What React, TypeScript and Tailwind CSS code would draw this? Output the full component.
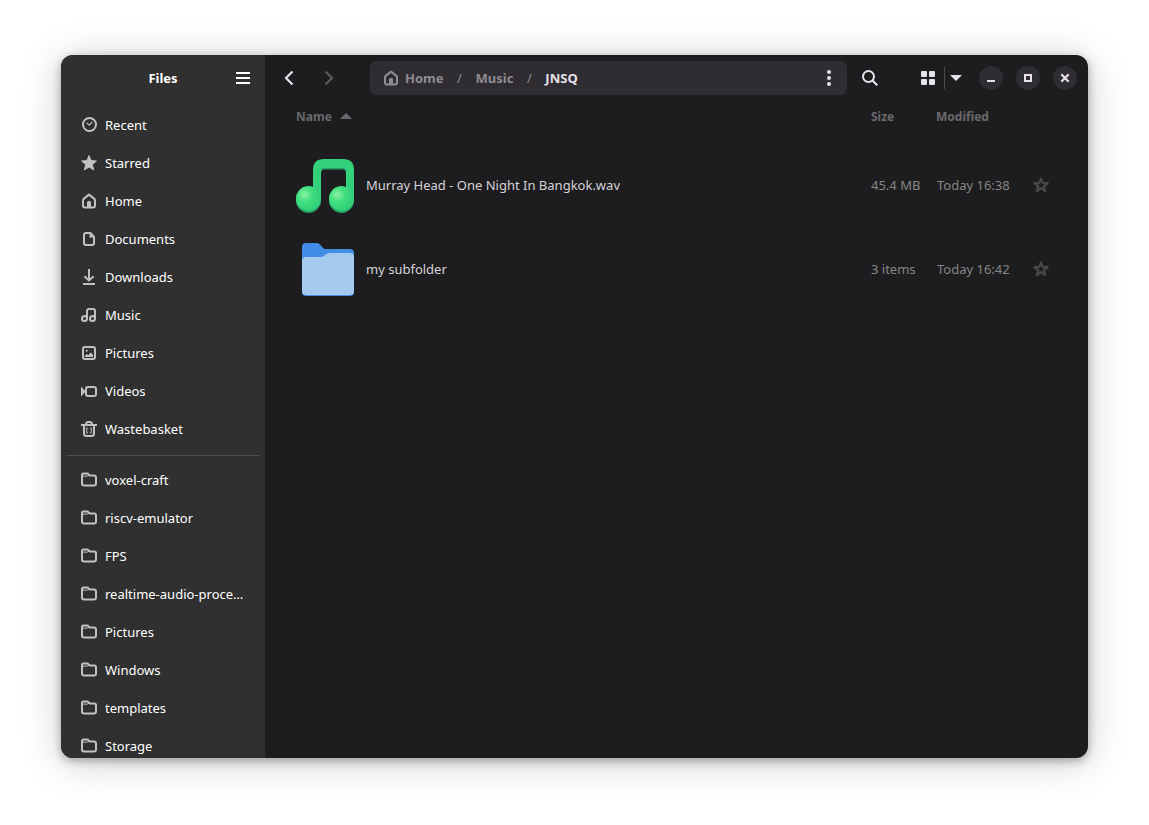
import React from "react";

type IconProps = { className?: string };

function Svg({ className = "", children }: { className?: string; children: React.ReactNode }) {
  return (
    <svg className={`size-4 shrink-0 ${className}`} viewBox="0 0 16 16" fill="none" aria-hidden="true">
      {children}
    </svg>
  );
}

const RecentIcon = (p: IconProps) => (
  <Svg {...p}>
    <circle cx="8.5" cy="7.5" r="6.5" stroke="currentColor" strokeWidth="2" />
    <path d="M5.6 5.6L8.1 8.1L11.4 4.8" stroke="currentColor" strokeWidth="1.1" />
  </Svg>
);

const StarIcon = (p: IconProps) => (
  <Svg {...p}>
    <path
      d="M8 .6L10.1 5.6L15.4 6L11.3 9.5L12.7 14.9L8 12L3.3 14.9L4.7 9.5L.6 6L5.9 5.6Z"
      fill="currentColor"
      stroke="currentColor"
      strokeWidth="1"
      strokeLinejoin="round"
    />
  </Svg>
);

const StarOutlineIcon = (p: IconProps) => (
  <Svg {...p}>
    <path
      d="M8 1.6L9.7 5.9L14.5 6.2L10.8 9.2L12.1 13.9L8 11.3L3.9 13.9L5.2 9.2L1.5 6.2L6.3 5.9Z"
      stroke="currentColor"
      strokeWidth="2.4"
      strokeLinejoin="round"
    />
  </Svg>
);

const HomeIcon = (p: IconProps) => (
  <Svg {...p}>
    <path
      d="M8 1.6L13.1 5.6Q14 6.3 14 7.4V12.6Q14 14.500 12 14.500H4Q2 14.500 2 12.6V7.4Q2 6.3 2.9 5.6Z"
      stroke="currentColor"
      strokeWidth="2"
      strokeLinejoin="round"
    />
    <path d="M6 15V9.500Q6 8 7.500 8H8.500Q10 8 10 9.500V15Z" fill="currentColor" />
  </Svg>
);

const DocumentIcon = (p: IconProps) => (
  <Svg {...p}>
    <path
      d="M5 2H9.4L13 5.6V12Q13 14 11 14H5Q3 14 3 12V4Q3 2 5 2Z"
      stroke="currentColor"
      strokeWidth="2"
      strokeLinejoin="round"
    />
    <path d="M8.500 2V6.500H13Z" fill="currentColor" />
  </Svg>
);

const DownloadIcon = (p: IconProps) => (
  <Svg {...p}>
    <path d="M8 0V11M3.4 7.2L8 11.4L12.6 7.2" stroke="currentColor" strokeWidth="2" />
    <path d="M2 15H14" stroke="currentColor" strokeWidth="2" />
  </Svg>
);

const MusicIcon = (p: IconProps) => (
  <Svg {...p}>
    <path d="M6 11.5V4Q6 2 8 2H12Q14 2 14 4V11.5" stroke="currentColor" strokeWidth="2" />
    <circle cx="3.500" cy="11.5" r="2.500" stroke="currentColor" strokeWidth="2" />
    <circle cx="11.500" cy="11.5" r="2.500" stroke="currentColor" strokeWidth="2" />
  </Svg>
);

const PictureIcon = (p: IconProps) => (
  <Svg {...p}>
    <rect x="2" y="2" width="12" height="12" rx="2" stroke="currentColor" strokeWidth="2" />
    <path d="M4 12V10.5L6 9L7.4 10L9.8 7.4L12 9.8V12Z" fill="currentColor" />
    <circle cx="5.8" cy="5.8" r="1" fill="currentColor" />
  </Svg>
);

const VideoIcon = (p: IconProps) => (
  <Svg {...p}>
    <rect x="5" y="4" width="10" height="9" rx="2" stroke="currentColor" strokeWidth="2" />
    <path d="M0 3.6L4.6 8.5L0 13.4Z" fill="currentColor" />
  </Svg>
);

const TrashIcon = (p: IconProps) => (
  <Svg {...p}>
    <path d="M0 4H16" stroke="currentColor" strokeWidth="2" />
    <path d="M5 3.6Q5 1 7 1H9Q11 1 11 3.6" stroke="currentColor" strokeWidth="2" />
    <path d="M3 4V12.5Q3 15 5.5 15H10.5Q13 15 13 12.5V4" stroke="currentColor" strokeWidth="2" />
    <path d="M6.9 7H5.7V12H6.9M9.1 7H10.3V12H9.1" stroke="currentColor" strokeWidth="1" />
  </Svg>
);

const FolderIcon = (p: IconProps) => (
  <Svg {...p}>
    <path
      d="M1 4.500V3Q1 1.500 2.500 1.500H6Q7 1.500 7.600 2.300L8.500 3.500H13Q15 3.500 15 5.500V11.500Q15 13.500 13 13.500H3Q1 13.500 1 11.500Z"
      stroke="currentColor"
      strokeWidth="2"
      strokeLinejoin="round"
    />
    <path d="M1 4.100H6.4L8.6 2.8" stroke="currentColor" strokeWidth="1" />
  </Svg>
);

const AudioFileIcon = () => (
  <svg className="size-[58px] shrink-0" viewBox="0 0 58 58" aria-hidden="true">
    <defs>
      <radialGradient id="noteHead" cx="0.34" cy="0.35" r="0.6">
        <stop offset="0" stopColor="#8df0a4" />
        <stop offset="0.5" stopColor="#3fe07f" />
        <stop offset="1" stopColor="#33d17a" />
      </radialGradient>
    </defs>
    <path d="M24 18V10H51V18H50Q50 13.500 47 13.500H28Q25 13.500 25 18Z" fill="#26a269" />
    <rect y="31" width="25" height="26" rx="12.500" fill="#26a269" />
    <rect x="33" y="31" width="25" height="26" rx="12.500" fill="#26a269" />
    <path d="M17 43V14Q17 3 28 3H47Q58 3 58 14V43H50V15Q50 12 47 12H28Q25 12 25 15V43Z" fill="#33d17a" />
    <rect y="30" width="25" height="25" rx="12.500" fill="url(#noteHead)" />
    <rect x="33" y="30" width="25" height="25" rx="12.500" fill="url(#noteHead)" />
  </svg>
);

const FolderFileIcon = () => (
  <svg className="size-[58px] shrink-0" viewBox="0 0 58 58" aria-hidden="true">
    <path
      d="M10 3H20.500Q23 3 24.500 5L27 8Q28 9 29.500 9H54Q58 9 58 13V52Q58 56 54 56H10Q6 56 6 52V7Q6 3 10 3Z"
      fill="#438de6"
    />
    <path
      d="M10 17H24.500Q27 17 28.500 15.500L30.500 14Q32 13 34 13H54Q58 13 58 17V51Q58 55 54 55H10Q6 55 6 51V21Q6 17 10 17Z"
      fill="#a4caee"
    />
  </svg>
);

type Place = { name: string; Icon: (p: IconProps) => React.ReactElement };

const places: Place[] = [
  { name: "Recent", Icon: RecentIcon },
  { name: "Starred", Icon: StarIcon },
  { name: "Home", Icon: HomeIcon },
  { name: "Documents", Icon: DocumentIcon },
  { name: "Downloads", Icon: DownloadIcon },
  { name: "Music", Icon: MusicIcon },
  { name: "Pictures", Icon: PictureIcon },
  { name: "Videos", Icon: VideoIcon },
  { name: "Wastebasket", Icon: TrashIcon },
];

const bookmarks: Place[] = [
  "voxel-craft",
  "riscv-emulator",
  "FPS",
  "realtime-audio-proce…",
  "Pictures",
  "Windows",
  "templates",
  "Storage",
].map((name) => ({ name, Icon: FolderIcon }));

const files = [
  { name: "Murray Head - One Night In Bangkok.wav", size: "45.4 MB", modified: "Today 16:38", Icon: AudioFileIcon },
  { name: "my subfolder", size: "3 items", modified: "Today 16:42", Icon: FolderFileIcon },
];

function PlaceList({ items }: { items: Place[] }) {
  return (
    <ul>
      {items.map(({ name, Icon }) => (
        <li key={name}>
          <a href="#" className="flex h-[38px] items-center gap-2 rounded-md px-3.5 hover:bg-white/5">
            <Icon className="text-[#c1c1c1]" />
            <span className="truncate">{name}</span>
          </a>
        </li>
      ))}
    </ul>
  );
}

function Sidebar() {
  return (
    <aside className="flex w-[204px] shrink-0 flex-col bg-[#303030] text-white">
      <header className="grid h-[46px] shrink-0 grid-cols-[34px_1fr_34px] items-center px-[5px]">
        <h1 className="col-start-2 text-center font-bold">Files</h1>
        <button aria-label="Main menu" className="grid size-[34px] place-items-center">
          <Svg>
            <path d="M1 3H15M1 8H15M1 13H15" stroke="currentColor" strokeWidth="2" />
          </Svg>
        </button>
      </header>
      <nav aria-label="Places" className="min-h-0 flex-1 overflow-hidden pt-[5px] pr-[5px] pl-1.5">
        <PlaceList items={places} />
        <hr className="mt-[7px] mb-[5px] border-[#505050]" />
        <PlaceList items={bookmarks} />
      </nav>
    </aside>
  );
}

function WindowButton({ label, children }: { label: string; children: React.ReactNode }) {
  return (
    <button aria-label={label} className="grid size-6 place-items-center rounded-full bg-[#302d32]">
      <Svg>{children}</Svg>
    </button>
  );
}

function HeaderBar() {
  return (
    <header className="flex h-[46px] shrink-0 items-center pr-[11px] pl-[7px] text-[#e7e1e9]">
      <div className="flex gap-1.5">
        <button aria-label="Back" className="grid size-[34px] place-items-center">
          <Svg>
            <path d="M11.500 1.500L5 8L11.500 14.500" stroke="currentColor" strokeWidth="2.200" />
          </Svg>
        </button>
        <button aria-label="Forward" disabled className="grid size-[34px] place-items-center text-[#5b595d]">
          <Svg>
            <path d="M4.500 1.500L11 8L4.500 14.500" stroke="currentColor" strokeWidth="2.200" />
          </Svg>
        </button>
      </div>
      <nav
        aria-label="Path"
        className="ml-6 flex h-[34px] min-w-0 flex-1 items-center rounded-md bg-[#302d32] pl-[13px] font-bold text-[#8f8c92]"
      >
        <a href="#" className="flex items-center gap-1.5">
          <HomeIcon />
          Home
        </a>
        <span className="w-8 text-center font-normal">/</span>
        <a href="#">Music</a>
        <span className="w-8 text-center font-normal">/</span>
        <a href="#" aria-current="page" className="text-[#e7e1e9]">JNSQ</a>
        <button aria-label="Folder menu" className="ml-auto grid size-9 place-items-center text-[#e7e1e9]">
          <Svg>
            <circle cx="8" cy="2" r="2" fill="currentColor" />
            <circle cx="8" cy="8" r="2" fill="currentColor" />
            <circle cx="8" cy="14" r="2" fill="currentColor" />
          </Svg>
        </button>
      </nav>
      <button aria-label="Search" className="ml-1.5 grid size-[34px] place-items-center">
        <Svg>
          <circle cx="6.500" cy="6.500" r="5.500" stroke="currentColor" strokeWidth="2" />
          <path d="M10.500 10.500L15.300 15.300" stroke="currentColor" strokeWidth="2.200" />
        </Svg>
      </button>
      <div className="ml-6 flex items-center">
        <button aria-label="Grid view" className="grid h-[34px] w-[33px] place-items-center">
          <Svg>
            <rect x="1" y="1" width="6" height="6" rx="1" fill="currentColor" />
            <rect x="9" y="1" width="6" height="6" rx="1" fill="currentColor" />
            <rect x="1" y="9" width="6" height="6" rx="1" fill="currentColor" />
            <rect x="9" y="9" width="6" height="6" rx="1" fill="currentColor" />
          </Svg>
        </button>
        <span className="h-[22px] w-px bg-[#4a494c]" />
        <button aria-label="View options" className="grid h-[34px] w-[22px] place-items-center">
          <Svg>
            <path d="M2 5H14L8 11Z" fill="currentColor" />
          </Svg>
        </button>
      </div>
      <div className="ml-3 flex gap-[13px]">
        <WindowButton label="Minimise">
          <path d="M4 11H12" stroke="currentColor" strokeWidth="2" />
        </WindowButton>
        <WindowButton label="Maximise">
          <rect x="5" y="5" width="6" height="6" stroke="currentColor" strokeWidth="2" />
        </WindowButton>
        <WindowButton label="Close">
          <path d="M4.300 4.300L11.700 11.700M11.700 4.300L4.300 11.700" stroke="currentColor" strokeWidth="2.200" />
        </WindowButton>
      </div>
    </header>
  );
}

function FileTable() {
  return (
    <table className="w-full table-fixed border-collapse text-left">
      <colgroup>
        <col />
        <col className="w-[65px]" />
        <col className="w-[95px]" />
        <col className="w-[57px]" />
      </colgroup>
      <thead className="text-xs text-[#6a686c]">
        <tr className="h-8">
          <th className="p-0 pl-[31px] font-bold">
            <button className="flex items-center gap-1.5">
              Name
              <Svg>
                <path d="M2 10H14L8 4Z" fill="currentColor" />
              </Svg>
            </button>
          </th>
          <th className="p-0 font-bold">Size</th>
          <th className="p-0 font-bold">Modified</th>
          <td />
        </tr>
        <tr className="h-2.5" />
      </thead>
      <tbody className="text-[#868587]">
        {files.map(({ name, size, modified, Icon }) => (
          <tr key={name} className="h-[84px]">
            <td className="p-0 pl-[31px]">
              <div className="flex items-center gap-3 text-[#d6d3d8]">
                <Icon />
                <span className="truncate">{name}</span>
              </div>
            </td>
            <td className="p-0 whitespace-nowrap">{size}</td>
            <td className="p-0 pl-px whitespace-nowrap">{modified}</td>
            <td className="p-0">
              <button aria-label={`Star ${name}`} className="grid size-5 place-items-center text-[#474649]">
                <StarOutlineIcon />
              </button>
            </td>
          </tr>
        ))}
      </tbody>
    </table>
  );
}

export default function App() {
  return (
    <div className="h-screen bg-white px-[61px] pt-[55px] pb-[67px] font-['Noto_Sans',sans-serif] text-[13px] leading-5">
      <div className="flex h-full overflow-hidden rounded-xl bg-[#1d1d1f] shadow-[0_3px_10px_rgba(0,0,0,0.3),0_4px_40px_rgba(0,0,0,0.2)]">
        <Sidebar />
        <main className="flex min-w-0 flex-1 flex-col">
          <HeaderBar />
          <FileTable />
        </main>
      </div>
    </div>
  );
}
